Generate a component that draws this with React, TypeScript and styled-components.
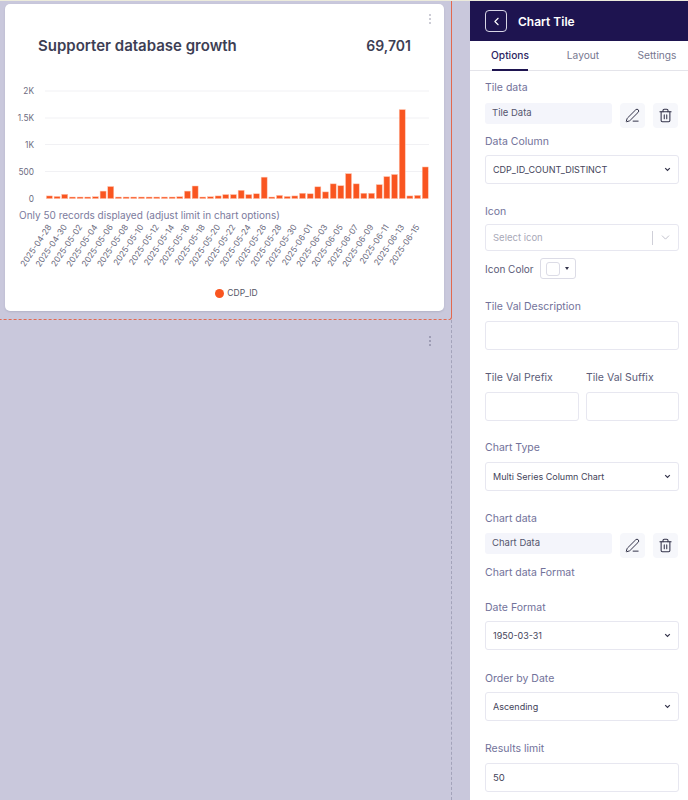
import styled, { createGlobalStyle } from 'styled-components';
import { ChevronDown, ChevronLeft, PenLine, Trash2 } from 'lucide-react';

const GlobalStyle = createGlobalStyle`
  html, body {
    margin: 0;
    padding: 0;
    background: #c9c8dc;
  }
  * {
    box-sizing: border-box;
  }
`;

const FONT = `Inter, 'Noto Sans', sans-serif`;

const SELECT_ARROW = `url("data:image/svg+xml,%3Csvg xmlns='http://www.w3.org/2000/svg' width='7' height='5' viewBox='0 0 7 5'%3E%3Cpath d='M1.2 1.2 3.5 3.5l2.3-2.3' fill='none' stroke='%2333334a' stroke-width='1.2'/%3E%3C/svg%3E")`;

// approximate daily counts read off the chart
const VALUES = [
  50, 40, 80, 10, 20, 10, 35, 140, 225, 10, 10, 10, 10, 10, 20, 20, 20, 35, 140,
  235, 10, 35, 50, 75, 75, 155, 75, 90, 400, 25, 60, 40, 50, 100, 90, 220, 125,
  275, 240, 465, 275, 100, 100, 260, 410, 450, 1660, 50, 60, 590,
];

const DATES = [
  '04-28', '04-30', '05-02', '05-04', '05-06', '05-08', '05-10', '05-12', '05-14',
  '05-16', '05-18', '05-20', '05-22', '05-24', '05-26', '05-28', '05-30', '06-01',
  '06-03', '06-05', '06-07', '06-09', '06-11', '06-13', '06-15',
];

const TICKS = [
  { label: '2K', y: 91 },
  { label: '1.5K', y: 118 },
  { label: '1K', y: 144.5 },
  { label: '500', y: 171.5 },
  { label: '0', y: 198.5 },
];

const Page = styled.div`
  display: flex;
  width: 688px;
  height: 800px;
  overflow: hidden;
  font-family: ${FONT};
  border-top: 1px solid #ecebdc;
`;

const Canvas = styled.main`
  width: 470px;
  flex-shrink: 0;
  display: flex;
  flex-direction: column;
`;

const Cell = styled.div<{ $active?: boolean }>`
  position: relative;
  width: 452px;
  padding: 3px 0 0 5px;
  ${(p) =>
    p.$active
      ? `
    height: 319px;
    border-right: 1px solid #e2694f;
    border-bottom: 1px dashed #e2694f;
    border-bottom-right-radius: 3px;
  `
      : `
    flex: 1;
    border-right: 1px dashed #a3a3ba;
  `}
`;

const Kebab = styled.svg<{ $top: number; $faint?: boolean }>`
  position: absolute;
  top: ${(p) => p.$top}px;
  left: 428px;
  width: 4px;
  height: 12px;
  fill: ${(p) => (p.$faint ? '#bdbdc8' : '#8f8fa8')};
`;

const Card = styled.section`
  width: 439px;
  height: 307px;
  background: #ffffff;
  border-radius: 5px;
  box-shadow: 0 1px 2px rgba(60, 60, 90, 0.15);
`;

const TitleRow = styled.header`
  display: flex;
  justify-content: space-between;
  align-items: center;
  height: 76px;
  padding: 8px 33px 0;
  font-size: 15px;
  font-weight: 600;
  line-height: 20px;
  color: #3d3e54;
`;

const TotalValue = styled.span`
  font-size: 14px;
`;

const PlotSvg = styled.svg`
  display: block;
  width: 439px;
  height: 125px;
  font-family: ${FONT};
`;

const AxisLabel = styled.text`
  font-size: 8.3px;
  fill: #6c6c80;
`;

const Note = styled.p`
  margin: 0;
  padding: 2px 0 0 14px;
  height: 17px;
  font-size: 10px;
  line-height: 17px;
  color: #7b7b9d;
`;

const DatesSvg = styled.svg`
  display: block;
  width: 439px;
  height: 54px;
  font-family: ${FONT};
`;

const Legend = styled.div`
  display: flex;
  justify-content: center;
  align-items: center;
  gap: 3px;
  margin-top: 12px;
  padding-left: 24px;
  font-size: 8.5px;
  color: #555566;
`;

const LegendDot = styled.span`
  width: 9px;
  height: 9px;
  border-radius: 50%;
  background: #f95520;
`;

const Panel = styled.aside`
  flex: 1;
  background: #ffffff;
  font-size: 10px;
`;

const PanelHeader = styled.header`
  display: flex;
  align-items: center;
  gap: 11px;
  height: 40px;
  padding-left: 15px;
  background: #1e1450;
  color: #ffffff;
  font-size: 12px;
  font-weight: 600;
`;

const BackButton = styled.button`
  display: flex;
  align-items: center;
  justify-content: center;
  width: 22px;
  height: 22px;
  padding: 0;
  background: transparent;
  border: 1px solid #d8d6e6;
  border-radius: 4px;
  color: #ffffff;
`;

const Tabs = styled.nav`
  display: flex;
  height: 30px;
  border-bottom: 1px solid #e4e4ea;
`;

const Tab = styled.div<{ $active?: boolean; $width: number }>`
  position: relative;
  width: ${(p) => p.$width}px;
  text-align: center;
  font-size: 10.2px;
  font-weight: ${(p) => (p.$active ? 500 : 400)};
  line-height: 29px;
  color: ${(p) => (p.$active ? '#2c2461' : '#77778f')};

  ${(p) =>
    p.$active &&
    `
    &::after {
      content: '';
      position: absolute;
      left: 22px;
      width: 36px;
      bottom: -1px;
      height: 2px;
      background: #1e1450;
    }
  `}
`;

const Form = styled.div`
  padding: 0 9px 0 15px;
`;

const Label = styled.label<{ $top: number; $dark?: boolean }>`
  display: block;
  margin-top: ${(p) => p.$top}px;
  height: 15px;
  font-size: 10.5px;
  line-height: 15px;
  color: ${(p) => (p.$dark ? '#5c5c78' : '#72729a')};
`;

const DataRow = styled.div<{ $top: number }>`
  display: flex;
  gap: 8px;
  margin-top: ${(p) => p.$top}px;
`;

const Pill = styled.div`
  width: 127px;
  height: 21px;
  padding-left: 7px;
  background: #f4f5fb;
  border-radius: 3px;
  font-size: 9.5px;
  line-height: 20px;
  color: #55556e;
`;

const IconButton = styled.button`
  display: flex;
  align-items: center;
  justify-content: center;
  width: 25px;
  height: 25px;
  padding: 0;
  background: #f6f7fb;
  border: none;
  border-radius: 4px;
  color: #33334a;
`;

const Select = styled.select<{ $top: number }>`
  display: block;
  appearance: none;
  width: 194px;
  height: 29px;
  margin-top: ${(p) => p.$top}px;
  padding: 0 7px;
  background: #ffffff ${SELECT_ARROW} no-repeat right 7px center;
  border: 1px solid #e7e7f0;
  border-radius: 3px;
  font-family: ${FONT};
  font-size: 9px;
  color: #44445a;
`;

const IconSelect = styled.div`
  display: flex;
  align-items: center;
  width: 194px;
  height: 27px;
  margin-top: 5px;
  padding-left: 7px;
  border: 1px solid #e7e7f0;
  border-radius: 3px;
  font-size: 9.5px;
  color: #a9a9b8;
`;

const IconSelectValue = styled.span`
  flex: 1;
`;

const IconSelectSide = styled.span`
  display: flex;
  align-items: center;
  justify-content: center;
  width: 26px;
  height: 14px;
  border-left: 1px solid #cfcfd8;
  color: #b4b4c0;
`;

const ColorRow = styled.div`
  display: flex;
  align-items: center;
  gap: 6px;
  margin-top: 7px;
  font-size: 10px;
  color: #5c5c78;
`;

const ColorButton = styled.div`
  display: flex;
  align-items: center;
  gap: 5px;
  width: 36px;
  height: 21px;
  padding-left: 5px;
  border: 1px solid #dcdce6;
  border-radius: 3px;
`;

const Swatch = styled.span`
  width: 14px;
  height: 14px;
  border: 1px solid #dcdce6;
  border-radius: 3px;
  background: #ffffff;
`;

const Caret = styled.span`
  width: 0;
  height: 0;
  border-left: 2.5px solid transparent;
  border-right: 2.5px solid transparent;
  border-top: 3px solid #33334a;
`;

const TextInput = styled.input<{ $width?: number }>`
  display: block;
  width: ${(p) => p.$width ?? 194}px;
  height: 29px;
  margin-top: 7px;
  padding: 0 7px;
  background: #ffffff;
  border: 1px solid #e7e7f0;
  border-radius: 3px;
  font-family: ${FONT};
  font-size: 9.5px;
  color: #44445a;
`;

const Split = styled.div`
  display: flex;
  gap: 7px;
  margin-top: 8px;
`;

const SplitColumn = styled.div`
  display: flex;
  flex-direction: column;
`;

const ActionButtons = () => (
  <>
    <IconButton aria-label="Edit">
      <PenLine size={15} strokeWidth={1.6} />
    </IconButton>
    <IconButton aria-label="Delete">
      <Trash2 size={15} strokeWidth={1.7} />
    </IconButton>
  </>
);

const Dots = ({ top, faint }: { top: number; faint?: boolean }) => (
  <Kebab $top={top} $faint={faint} viewBox="0 0 4 12">
    <circle cx="2" cy="2" r="1" />
    <circle cx="2" cy="6" r="1" />
    <circle cx="2" cy="10" r="1" />
  </Kebab>
);

const Chart = () => (
  <PlotSvg viewBox="5 80 439 125">
    {TICKS.map((t) => (
      <g key={t.label}>
        {t.label !== '0' && (
          <line x1="45" x2="429" y1={t.y} y2={t.y} stroke="#f1f1f4" strokeWidth="1" />
        )}
        <AxisLabel x="34" y={t.y + 3} textAnchor="end">
          {t.label}
        </AxisLabel>
      </g>
    ))}
    {VALUES.map((v, i) => {
      const h = Math.max((v / 500) * 26.8, 1.6);
      return (
        <rect
          key={i}
          x={46.4 + i * 7.67}
          y={198.6 - h}
          width={6}
          height={h}
          fill="#f95520"
          stroke="#ffc4ae"
          strokeWidth="0.5"
        />
      );
    })}
  </PlotSvg>
);

const DateLabels = () => (
  <DatesSvg viewBox="5 224 439 54">
    {DATES.map((d, i) => {
      const x = 52 + i * 15.33;
      return (
        <AxisLabel key={d} x={x} y={229} textAnchor="end" transform={`rotate(-56 ${x} 229)`}>
          {`2025-${d}`}
        </AxisLabel>
      );
    })}
  </DatesSvg>
);

const App = () => {
  return (
    <Page>
      <GlobalStyle />
      <Canvas>
        <Cell $active>
          <Dots top={12} faint />
          <Card>
            <TitleRow>
              <span>Supporter database growth</span>
              <TotalValue>69,701</TotalValue>
            </TitleRow>
            <Chart />
            <Note>Only 50 records displayed (adjust limit in chart options)</Note>
            <DateLabels />
            <Legend>
              <LegendDot />
              <span>CDP_ID</span>
            </Legend>
          </Card>
        </Cell>
        <Cell>
          <Dots top={15} />
        </Cell>
      </Canvas>
      <Panel>
        <PanelHeader>
          <BackButton aria-label="Back">
            <ChevronLeft size={13} strokeWidth={2} />
          </BackButton>
          Chart Tile
        </PanelHeader>
        <Tabs>
          <Tab $active $width={80}>Options</Tab>
          <Tab $width={66}>Layout</Tab>
          <Tab $width={82}>Settings</Tab>
        </Tabs>
        <Form>
          <Label $top={9}>Tile data</Label>
          <DataRow $top={8}>
            <Pill>Tile Data</Pill>
            <ActionButtons />
          </DataRow>
          <Label $top={6}>Data Column</Label>
          <Select $top={6} defaultValue="CDP_ID_COUNT_DISTINCT">
            <option>CDP_ID_COUNT_DISTINCT</option>
          </Select>
          <Label $top={20}>Icon</Label>
          <IconSelect>
            <IconSelectValue>Select icon</IconSelectValue>
            <IconSelectSide>
              <ChevronDown size={13} strokeWidth={1.5} />
            </IconSelectSide>
          </IconSelect>
          <ColorRow>
            Icon Color
            <ColorButton>
              <Swatch />
              <Caret />
            </ColorButton>
          </ColorRow>
          <Label $top={20}>Tile Val Description</Label>
          <TextInput />
          <Split>
            <SplitColumn>
              <Label $top={12} $dark>Tile Val Prefix</Label>
              <TextInput $width={94} />
            </SplitColumn>
            <SplitColumn>
              <Label $top={12} $dark>Tile Val Suffix</Label>
              <TextInput $width={93} />
            </SplitColumn>
          </Split>
          <Label $top={19}>Chart Type</Label>
          <Select $top={7} defaultValue="Multi Series Column Chart">
            <option>Multi Series Column Chart</option>
          </Select>
          <Label $top={20}>Chart data</Label>
          <DataRow $top={7}>
            <Pill>Chart Data</Pill>
            <ActionButtons />
          </DataRow>
          <Label $top={7}>Chart data Format</Label>
          <Label $top={20}>Date Format</Label>
          <Select $top={6} defaultValue="1950-03-31">
            <option>1950-03-31</option>
          </Select>
          <Label $top={21}>Order by Date</Label>
          <Select $top={6} defaultValue="Ascending">
            <option>Ascending</option>
          </Select>
          <Label $top={20}>Results limit</Label>
          <TextInput defaultValue="50" />
        </Form>
      </Panel>
    </Page>
  );
};

export default App;
